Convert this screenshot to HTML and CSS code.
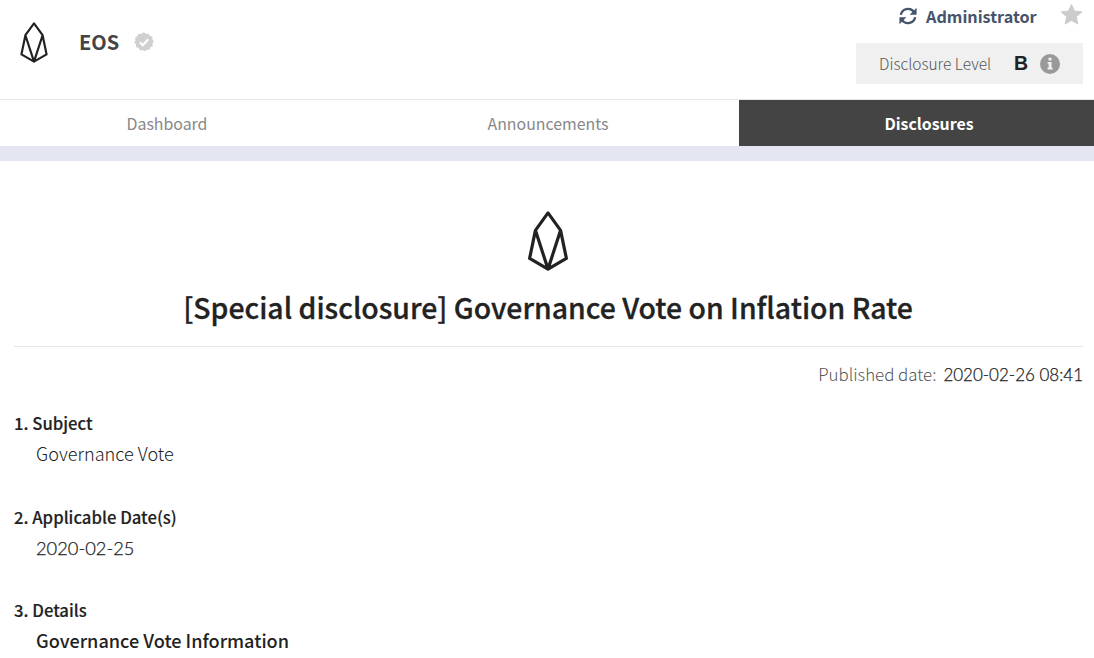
FILE: index.html
```html
<!DOCTYPE html>
<html lang="en">
<head>
<meta charset="utf-8">
<title>EOS Disclosures</title>
<link rel="stylesheet" href="styles.css">
</head>
<body>
<header class="header">
  <div class="project">
    <svg class="logo-small" viewBox="0 0 42 62" fill="none" stroke="#222" stroke-width="3.300" stroke-linejoin="round"><path d="M21 2L8 20L2 49L21 60L40 49L34 20ZM8 20L21 60L34 20"/></svg>
    <span class="project-name">EOS</span>
    <svg class="verified" viewBox="0 0 20 20"><path fill="#d0d0d0" d="M10 0.300L12 2L14.500 1.400L15.700 3.700L18.300 4.400L18.300 7L19.800 9.200L18.500 11.400L18.800 14L16.500 15.300L15.400 17.700L12.800 17.700L10.700 19.300L8.500 18L5.900 18.400L4.600 16.100L2.100 15.200L2 12.600L0.300 10.600L1.500 8.300L1 5.700L3.200 4.300L4.200 1.900L6.900 1.900Z"/><path d="M5.800 10.300l3 2.900 5.500-6" fill="none" stroke="#fff" stroke-width="2"/></svg>
  </div>
  <div class="actions">
    <div class="account">
      <svg class="refresh" viewBox="0 0 512 512" fill="none" stroke="#46536a" stroke-width="68"><path d="M52 220A210 210 0 0 1 425 138M460 292A210 210 0 0 1 87 374"/><path fill="#46536a" stroke="none" d="M500 20V218H302ZM12 492V294H210Z"/></svg>
      <span class="account-name">Administrator</span>
      <svg class="star" viewBox="0 0 24 24"><path fill="#ccc" stroke="#ccc" stroke-linejoin="round" d="M12 1.500L15.100 8.400L22.800 9.300L17.100 14.300L18.700 22L12 18.200L5.300 22L6.900 14.300L1.200 9.300L8.900 8.400Z"/></svg>
    </div>
    <div class="level">
      <span class="level-label">Disclosure Level</span>
      <span class="level-grade">B</span>
      <svg class="info" viewBox="0 0 20 20"><circle cx="10" cy="10" r="10" fill="#999"/><path fill="#f0f0f0" d="M8.500 3.800h3v2.700h-3zM7.600 8h4v5.800h1.100v1.800H7.500v-1.800h1.100V9.700h-1z"/></svg>
    </div>
  </div>
</header>
<nav class="tabs">
  <a class="tab">Dashboard</a>
  <a class="tab">Announcements</a>
  <a class="tab tab-active">Disclosures</a>
</nav>
<main class="document">
  <svg class="logo-large" viewBox="0 0 42 62" fill="none" stroke="#222" stroke-width="3.300" stroke-linejoin="round"><path d="M21 2L8 20L2 49L21 60L40 49L34 20ZM8 20L21 60L34 20"/></svg>
  <h1 class="title">[Special disclosure] Governance Vote on Inflation Rate</h1>
  <div class="published"><span class="published-label">Published date:</span><span class="published-date">2020-02-26 08:41</span></div>
  <section class="item">
    <h2 class="item-heading">1. Subject</h2>
    <p class="item-text">Governance Vote</p>
  </section>
  <section class="item">
    <h2 class="item-heading">2. Applicable Date(s)</h2>
    <p class="item-text item-date">2020-02-25</p>
  </section>
  <section class="item">
    <h2 class="item-heading">3. Details</h2>
    <p class="item-text item-strong">Governance Vote Information</p>
  </section>
</main>
</body>
</html>
```
FILE: styles.css
```css
* { box-sizing: border-box; }
body {
  margin: 0;
  height: 658px;
  overflow: hidden;
  background: #fff;
  color: #222;
  font-family: "Noto Sans CJK KR", "Open Sans", sans-serif;
}
svg { display: block; flex: none; }
.header {
  display: flex;
  justify-content: space-between;
  height: 100px;
  padding: 0 11px 0 20px;
  border-bottom: 1px solid #e6e6e6;
}
.project { display: flex; align-items: center; height: 84px; }
.logo-small { width: 28px; height: 41px; }
.project-name { margin-left: 31px; padding-bottom: 2px; font-size: 20px; font-weight: 700; color: #444; }
.verified { width: 20px; height: 20px; margin-left: 15px; }
.actions { width: 227px; }
.account { display: flex; align-items: center; height: 43px; padding: 0 0 11px 43px; }
.refresh { width: 18px; height: 18px; }
.account-name { margin-left: 9px; font-size: 16.200px; line-height: 30px; font-weight: 700; color: #46536a; white-space: nowrap; }
.star { width: 23px; height: 23px; margin: 0 0 3px auto; }
.level { display: flex; align-items: center; height: 41px; padding: 0 23px; background: #f0f0f0; white-space: nowrap; }
.level-label { padding-bottom: 2px; font-size: 15.500px; font-weight: 300; color: #555; }
.level-grade { margin-left: auto; font: 700 19.500px "Liberation Sans", sans-serif; }
.info { width: 20px; height: 20px; margin-left: 12px; }
.tabs {
  display: grid;
  grid-template-columns: repeat(3, 381px);
  justify-content: center;
  height: 61px;
  padding-left: 2px;
  border-bottom: 15px solid #e4e7f2;
}
.tab { display: flex; align-items: center; justify-content: center; color: #888; font-size: 15.900px; font-weight: 400; }
.tab-active { background: #444; color: #fff; font-weight: 700; }
.document { padding: 50px 11px 0 14px; }
.logo-large { width: 42px; height: 60px; margin: 0 auto; transform: translateX(-1px); }
.title { height: 76px; margin: 0; padding-right: 1px; border-bottom: 1px solid #e6e6e6; text-align: center; font-size: 28.400px; line-height: 72px; font-weight: 500; -webkit-text-stroke: 0.3px #222; white-space: nowrap; }
.published { display: flex; justify-content: flex-end; gap: 7px; height: 61px; padding-top: 14px; font-size: 16.900px; line-height: 26px; font-weight: 300; }
.published-label { color: #555; }
.published-date { padding-top: 1px; font-family: Lato, sans-serif; font-size: 17px; -webkit-text-stroke: 0.25px #222; }
.item { height: 93.500px; }
.item-heading { margin: 0; font-size: 16.700px; line-height: 30px; font-weight: 500; -webkit-text-stroke: 0.15px #222; }
.item-text { margin: 0 0 0 22px; font-size: 18.100px; line-height: 30px; font-weight: 300; }
.item-date { padding-top: 1px; font-family: Lato, sans-serif; font-size: 18.300px; -webkit-text-stroke: 0.25px #222; }
.item-strong { font-weight: 500; }
```
